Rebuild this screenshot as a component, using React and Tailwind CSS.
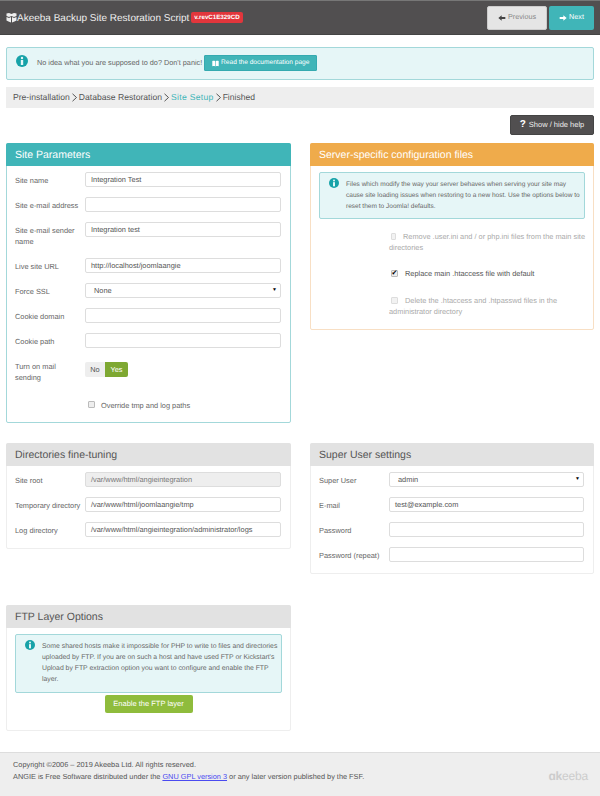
const font = { fontFamily: '"Liberation Sans", Arial, sans-serif' };

function InfoIcon({ size = 12 }) {
  return (
    <svg width={size} height={size} viewBox="0 0 24 24" className="shrink-0">
      <circle cx="12" cy="12" r="12" fill="#17a2a8" />
      <circle cx="12" cy="6" r="2.4" fill="#e6f6f7" />
      <rect x="9.6" y="10" width="4.8" height="10" fill="#e6f6f7" />
    </svg>
  );
}

function LogoIcon() {
  return (
    <svg width="11" height="10" viewBox="0 0 22 20" className="shrink-0" fill="#eee">
      <path d="M1 1l5-1 5 2 5-2 5 1v5l-5 2-5-2-5 2-5-2z" />
      <path d="M1 8l5 2 4-2v11l-5-2-4-2zM21 8l-5 2-4-2v11l5-2 4-2z" />
    </svg>
  );
}

function Field({ label, value, tall, select }) {
  return (
    <div className={`flex items-start ${tall ? 'h-[36px]' : 'h-[25px]'}`}>
      <label className="w-[70px] pt-[4px] pr-1 text-[7.4px] leading-[10.7px] text-[#666]">{label}</label>
      {select ? (
        <div className="flex-1 h-[15px] border border-[#ddd] rounded-[2px] bg-white flex items-center justify-between pl-2 pr-[3px] text-[7.4px] text-[#555]">
          <span>{value}</span>
          <span className="text-[5px] text-black">▼</span>
        </div>
      ) : (
        <div className="flex-1 h-[15px] border border-[#ddd] rounded-[2px] bg-white flex items-center px-[5px] text-[7.4px] text-[#555]">
          {value}
        </div>
      )}
    </div>
  );
}

function Panel({ title, head, border, className, children }) {
  return (
    <div className={`border rounded-[2px] ${border} ${className}`}>
      <div className={`h-[23px] -mx-px -mt-px rounded-t-[2px] flex items-center px-[9px] pt-[2px] text-[10.5px] ${head}`}>{title}</div>
      {children}
    </div>
  );
}

function Alert({ children, className }) {
  return (
    <div className={`flex items-start border border-[#a3d8da] rounded-[2px] bg-[#e6f6f7] leading-[11px] text-[#666] ${className}`}>
      <InfoIcon size={10} />
      <div className="ml-[7px] mt-px">{children}</div>
    </div>
  );
}

function Check({ checked, disabled, text, rest }) {
  return (
    <div className={`text-[7.4px] leading-[10.7px] ${disabled ? 'text-[#aaa]' : 'text-[#555]'}`}>
      <div className="flex items-center pl-[2px]">
        <span className={`w-[7px] h-[7px] -mt-[2px] border rounded-[1px] flex items-center justify-center text-[7px] leading-none text-black mr-[7px] ${disabled ? 'border-[#ddd] bg-[#f2f2f2]' : 'border-[#bbb] bg-[#eee]'}`}>
          {checked ? '✔' : ''}
        </span>
        <span className="whitespace-nowrap">{text}</span>
      </div>
      {rest && <div>{rest}</div>}
    </div>
  );
}

function Sep() {
  return (
    <svg width="7" height="9" viewBox="0 0 7 9" fill="none" stroke="#444" strokeWidth="0.9" className="mx-[1px]">
      <path d="M1.5 0.8l4 3.7-4 3.7" />
    </svg>
  );
}

export default function App() {
  return (
    <div style={font} className="w-[600px] h-[796px] bg-white flex flex-col overflow-hidden [text-rendering:geometricPrecision]">
      <header className="h-[35px] shrink-0 bg-[#514f50] border-t border-[#777] border-b border-b-[#444] flex items-center pl-[6px] pr-[6px]">
        <LogoIcon />
        <span className="mt-px text-[10px] text-[#eee] whitespace-nowrap">Akeeba Backup Site Restoration Script</span>
        <span className="ml-[2px] h-[11px] px-[3px] rounded-[2px] bg-[#e2363c] text-white text-[6.2px] font-bold flex items-center">v.revC1E329CD</span>
        <div className="ml-auto flex gap-[2px]">
          <div className="w-[60px] h-[24px] rounded-[2px] bg-[#e5e5e5] border border-[#ccc] flex items-center justify-center gap-[2px] text-[7.2px] text-[#888]">
            <svg width="8" height="8" viewBox="0 0 24 24" fill="#444"><path d="M11 4v5h11v6H11v5L1 12z" /></svg>
            Previous
          </div>
          <div className="w-[45px] h-[24px] rounded-[2px] bg-[#40b5b8] flex items-center justify-center gap-[2px] text-[7.2px] text-white">
            <svg width="8" height="8" viewBox="0 0 24 24" fill="#fff"><path d="M13 4v5H2v6h11v5l10-8z" /></svg>
            Next
          </div>
        </div>
      </header>

      <main className="flex-1 px-[6px] pt-[12px]">
        <div className="h-[33px] border border-[#a3d8da] rounded-[2px] bg-[#e6f6f7] flex items-start pl-[9px] pt-[7px] text-[7.3px] text-[#666]">
          <InfoIcon size={12} />
          <span className="ml-[9px] mt-[3px]">No idea what you are supposed to do? Don't panic!</span>
          <span className="ml-[2px] h-[16px] w-[113px] rounded-[1px] bg-[#40b5b8] border border-[#35aab0] text-white text-[6.6px] flex items-center justify-center gap-[2px]">
            <svg width="7" height="7" viewBox="0 0 24 24" fill="#fff"><path d="M1 3c4-1 8-1 10 1v18c-2-2-6-2-10-1zM23 3c-4-1-8-1-10 1v18c2-2 6-2 10-1z" /></svg>
            Read the documentation page
          </span>
        </div>

        <div className="mt-[7px] h-[21px] bg-[#eee] flex items-center pl-[7px] text-[8.6px] text-[#555]">
          Pre-installation
          <Sep />
          Database Restoration
          <Sep />
          <span className="text-[#40b5b8] tracking-[0.3px]">Site Setup</span>
          <Sep />
          Finished
        </div>

        <div className="mt-[7px] flex justify-end">
          <div className="w-[84px] h-[20px] rounded-[2px] bg-[#514f50] border border-[#444] text-[#eee] text-[7.5px] flex items-center justify-center gap-[3px]">
            <span className="text-[10px] font-bold leading-none text-white">?</span>
            Show / hide help
          </div>
        </div>

        <div className="mt-[8px] grid grid-cols-[285px_284px] gap-x-[19px] items-start">
          <Panel title="Site Parameters" head="bg-[#40b5b8] text-white" border="border-[#a3d8da]" className="h-[280px]">
            <div className="pl-[8px] pr-[9px] pt-[6px]">
              <Field label="Site name" value="Integration Test" />
              <Field label="Site e-mail address" value="" />
              <Field label="Site e-mail sender name" value="Integration test" tall />
              <Field label="Live site URL" value="http://localhost/joomlaangie" />
              <Field label="Force SSL" value="None" select />
              <Field label="Cookie domain" value="" />
              <Field label="Cookie path" value="" />
              <div className="mt-[4px] flex items-start h-[38px]">
                <div className="w-[70px] text-[7.4px] leading-[10.7px] text-[#666] pr-4">Turn on mail sending</div>
                <div className="flex h-[15px] text-[7.4px] rounded-[2px] overflow-hidden">
                  <span className="w-[20px] bg-[#eee] text-[#555] flex items-center justify-center">No</span>
                  <span className="w-[23px] bg-[#7ea832] text-white flex items-center justify-center">Yes</span>
                </div>
              </div>
              <div className="pl-[70px]">
                <div className="flex items-center text-[7.4px] text-[#666]">
                  <span className="w-[7px] h-[7px] -mt-[2px] border border-[#bbb] bg-[#eee] rounded-[1px] mr-[6px] ml-[3px]" />
                  Override tmp and log paths
                </div>
              </div>
            </div>
          </Panel>

          <Panel title="Server-specific configuration files" head="bg-[#efab4b] text-white" border="border-[#f8dfc4]" className="h-[187px]">
            <div className="px-[8px] pt-[6px]">
              <Alert className="h-[47px] pl-[9px] pt-[5px] pr-[2px] text-[6.55px]">
                Files which modify the way your server behaves when serving your site may cause site loading issues when restoring to a new host. Use the options below to reset them to Joomla! defaults.
              </Alert>
              <div className="pl-[70px] mt-[13px] flex flex-col gap-[16px]">
                <Check disabled text="Remove .user.ini and / or php.ini files from the main site" rest="directories" />
                <Check checked text="Replace main .htaccess file with default" />
                <Check disabled text="Delete the .htaccess and .htpasswd files in the" rest="administrator directory" />
              </div>
            </div>
          </Panel>

          <Panel title="Directories fine-tuning" head="bg-[#e2e2e2] text-[#555]" border="border-[#eee]" className="mt-[20px] h-[106px]">
            <div className="pl-[8px] pr-[9px] pt-[6px]">
              <div className="flex items-start h-[25px]">
                <label className="w-[70px] pt-[4px] text-[7.4px] leading-[10.7px] text-[#666]">Site root</label>
                <div className="flex-1 h-[15px] border border-[#ddd] rounded-[2px] bg-[#eee] flex items-center px-[5px] text-[7.4px] text-[#777]">/var/www/html/angieintegration</div>
              </div>
              <Field label="Temporary directory" value="/var/www/html/joomlaangie/tmp" />
              <Field label="Log directory" value="/var/www/html/angieintegration/administrator/logs" />
            </div>
          </Panel>

          <Panel title="Super User settings" head="bg-[#e2e2e2] text-[#555]" border="border-[#eee]" className="mt-[20px] h-[131px]">
            <div className="pl-[8px] pr-[9px] pt-[6px]">
              <Field label="Super User" value="admin" select />
              <Field label="E-mail" value="test@example.com" />
              <Field label="Password" value="" />
              <Field label="Password (repeat)" value="" />
            </div>
          </Panel>

          <Panel title="FTP Layer Options" head="bg-[#e2e2e2] text-[#555]" border="border-[#eee]" className="mt-[31px] h-[126px]">
            <div className="px-[8px] pt-[6px] flex flex-col items-center">
              <Alert className="w-full h-[59px] pl-[9px] pt-[5px] text-[6.85px]">
                Some shared hosts make it impossible for PHP to write to files and directories uploaded by FTP. If you are on such a host and have used FTP or Kickstart's Upload by FTP extraction option you want to configure and enable the FTP layer.
              </Alert>
              <div className="mt-[2px] w-[88px] h-[18px] rounded-[2px] bg-[#8fbc3c] text-white text-[7.5px] flex items-center justify-center">Enable the FTP layer</div>
            </div>
          </Panel>
        </div>
      </main>

      <footer className="h-[44px] shrink-0 bg-[#eee] border-t border-[#ddd] flex justify-between pl-[13px] pr-[12px] pt-[6px] text-[7.35px] leading-[12px] text-[#555]">
        <div>
          <div>Copyright ©2006 – 2019 Akeeba Ltd. All rights reserved.</div>
          <div>
            ANGIE is Free Software distributed under the <a href="#" className="text-[#4a4af0] underline">GNU GPL version 3</a> or any later version published by the FSF.
          </div>
        </div>
        <div className="mt-[11px] text-[12px] leading-[12px] text-[#ccc] tracking-[-0.2px]">
          <span className="font-bold">ɑk</span>eeba
        </div>
      </footer>
    </div>
  );
}
